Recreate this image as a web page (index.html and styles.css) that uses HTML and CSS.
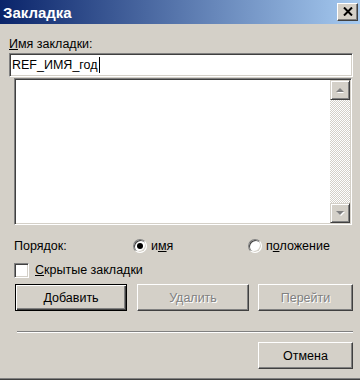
FILE: index.html
```html
<!DOCTYPE html>
<html lang="ru">
<head>
    <meta charset="UTF-8">
    <title>Закладка</title>
    <link rel="stylesheet" href="styles.css">
</head>
<body>

    <div class="window">
        <div class="titlebar">
            <span class="title">Закладка</span>
            <button class="close-btn">
                <svg width="10" height="9" viewBox="0 0 10 9">
                    <path d="M1 0.5 L9 8.5 M9 0.5 L1 8.5" stroke="#000" stroke-width="2" fill="none"/>
                </svg>
            </button>
        </div>

        <div class="dialog">
            <label class="field-label" for="bm-name"><u>И</u>мя закладки:</label>
            <div class="name-field" id="bm-name">
                <span>REF_ИМЯ_год</span><span class="caret"></span>
            </div>

            <div class="listbox">
                <div class="list-area"></div>
                <div class="scrollbar">
                    <div class="sb-btn">
                        <svg width="10" height="7" viewBox="0 0 10 7">
                            <polygon points="2,6 9,6 5.5,2.5" fill="#fff"/>
                            <polygon points="1,5 9,5 5,1" fill="#808080"/>
                        </svg>
                    </div>
                    <div class="sb-track"></div>
                    <div class="sb-btn">
                        <svg width="10" height="7" viewBox="0 0 10 7">
                            <polygon points="2,2 10,2 6,6" fill="#fff"/>
                            <polygon points="1,1 9,1 5,5" fill="#808080"/>
                        </svg>
                    </div>
                </div>
            </div>

            <div class="order-row">
                <span class="order-label">Порядок:</span>
                <label class="radio first"><span class="radio-mark checked"></span><span>и<u>м</u>я</span></label>
                <label class="radio"><span class="radio-mark"></span><span>п<u>о</u>ложение</span></label>
            </div>

            <label class="check-row"><span class="checkbox"></span><span><u>С</u>крытые закладки</span></label>

            <div class="btn-row">
                <button class="btn default"><u>Д</u>обавить</button>
                <button class="btn" disabled>Удалить</button>
                <button class="btn narrow" disabled>Перейти</button>
            </div>

            <div class="separator"></div>

            <div class="footer">
                <button class="btn narrow">Отмена</button>
            </div>
        </div>
    </div>

</body>
</html>
```

FILE: styles.css
```css
* {
    box-sizing: border-box;
    margin: 0;
    padding: 0;
}

body {
    font-family: 'Liberation Sans', Arial, sans-serif;
    font-size: 12.5px;
    color: #000;
    background-color: #d4d0c8;
    width: 360px;
    height: 380px;
    overflow: hidden;
}

.window {
    width: 360px;
    height: 380px;
    background-color: #d4d0c8;
    border-bottom: 1px solid #404040;
    box-shadow: inset 0 -1px 0 #808080;
}

/* Заголовок окна */
.titlebar {
    height: 24px;
    display: flex;
    justify-content: space-between;
    align-items: center;
    padding: 0 2px 0 3px;
    background: linear-gradient(to right, #0a246a, #a6caf0);
}

.title {
    color: #fff;
    font-size: 15px;
    font-weight: bold;
}

.close-btn {
    width: 21px;
    height: 18px;
    margin-top: -1px;
    display: flex;
    justify-content: center;
    align-items: center;
    background-color: #d4d0c8;
    border: 1px solid;
    border-color: #fff #404040 #404040 #fff;
    box-shadow: inset -1px -1px 0 #808080;
}

/* Содержимое */
.dialog {
    display: flex;
    flex-direction: column;
    align-items: flex-start;
}

.field-label {
    display: block;
    height: 16px;
    line-height: 16px;
    margin: 12px 0 1px 9px;
}

.name-field {
    width: 344px;
    height: 24px;
    margin-left: 9px;
    margin-bottom: 1px;
    padding-left: 2px;
    display: flex;
    align-items: center;
    background-color: #fff;
    border: 1px solid;
    border-color: #808080 #fff #fff #808080;
    box-shadow: inset 1px 1px 0 #404040, inset -1px -1px 0 #d4d0c8;
}

.caret {
    width: 1px;
    height: 16px;
    margin-left: 1px;
    background-color: #000;
}

.listbox {
    width: 338px;
    height: 147px;
    margin-left: 14px;
    padding: 1px;
    display: flex;
    background-color: #fff;
    border: 1px solid;
    border-color: #808080 #fff #fff #808080;
    box-shadow: inset 1px 1px 0 #404040, inset -1px -1px 0 #d4d0c8;
}

.list-area {
    flex: 1;
}

.scrollbar {
    width: 20px;
    display: flex;
    flex-direction: column;
}

.sb-btn {
    height: 20px;
    display: flex;
    justify-content: center;
    align-items: center;
    background-color: #d4d0c8;
    border: 1px solid;
    border-color: #d4d0c8 #404040 #404040 #d4d0c8;
    box-shadow: inset 1px 1px 0 #fff, inset -1px -1px 0 #808080;
}

.sb-track {
    flex: 1;
    background: repeating-conic-gradient(#d4d0c8 0 25%, #fff 0 50%) 0 0 / 2px 2px;
}

.order-row {
    height: 20px;
    margin: 11px 0 0 14px;
    display: flex;
    align-items: center;
}

.order-label {
    width: 119px;
}

.radio {
    display: flex;
    align-items: center;
    gap: 4px;
}

.radio.first {
    width: 115px;
}

.radio-mark {
    width: 14px;
    height: 14px;
    border-radius: 50%;
    position: relative;
    background-color: #fff;
    border: 1px solid;
    border-color: #808080 #fff #fff #808080;
    box-shadow: inset 1px 1px 0 #404040, inset -1px -1px 0 #d4d0c8;
}

.radio-mark.checked::after {
    content: "";
    position: absolute;
    left: 3px;
    top: 3px;
    width: 6px;
    height: 6px;
    border-radius: 50%;
    background-color: #000;
}

.check-row {
    height: 16px;
    margin: 6px 0 0 14px;
    display: flex;
    align-items: center;
    gap: 6px;
}

.checkbox {
    width: 15px;
    height: 15px;
    background-color: #fff;
    border: 1px solid;
    border-color: #808080 #fff #fff #808080;
    box-shadow: inset 1px 1px 0 #404040, inset -1px -1px 0 #d4d0c8;
}

.btn-row {
    margin: 6px 0 0 15px;
    display: flex;
}

.btn {
    width: 112px;
    height: 27px;
    font-family: inherit;
    font-size: 12.5px;
    color: #000;
    background-color: #d4d0c8;
    border: 1px solid;
    border-color: #fff #404040 #404040 #fff;
    box-shadow: inset -1px -1px 0 #808080;
}

.btn + .btn {
    margin-left: 10px;
}

.btn.narrow {
    width: 95px;
}

.btn-row .btn.narrow {
    margin-left: 9px;
}

.btn.default {
    border-color: #000;
    box-shadow: inset 1px 1px 0 #fff, inset -1px -1px 0 #404040, inset -2px -2px 0 #808080;
}

.btn:disabled {
    color: #808080;
    text-shadow: 1px 1px 0 #fff;
}

.separator {
    width: 336px;
    height: 2px;
    margin: 20px 0 0 17px;
    border-top: 1px solid #808080;
    border-bottom: 1px solid #fff;
}

.footer {
    width: 100%;
    margin-top: 9px;
    padding-right: 7px;
    display: flex;
    justify-content: flex-end;
}
```
